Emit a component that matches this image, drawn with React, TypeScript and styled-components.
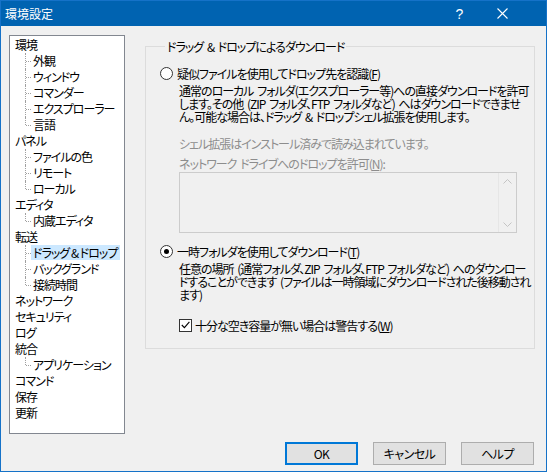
import React from 'react';
import styled, { createGlobalStyle } from 'styled-components';

const GlobalStyle = createGlobalStyle`
  html, body {
    margin: 0;
    padding: 0;
    background: #ffffff;
  }
  body {
    font-family: "Noto Sans CJK JP", "Noto Sans", sans-serif;
    font-size: 12px;
    font-feature-settings: "palt";
  }
`;

const Window = styled.div`
  width: 547px;
  height: 472px;
  box-sizing: border-box;
  border: 1px solid #1572c8;
  background: #f0f0f0;
  display: flex;
  flex-direction: column;
  color: #000;
`;

const TitleBar = styled.div`
  height: 25px;
  background: #0063b1;
  color: #fff;
  display: flex;
  align-items: center;
  padding-left: 4px;
  font-size: 12px;
  line-height: 14px;
`;

const Title = styled.div`
  flex: 1;
`;

const TitleButton = styled.div`
  width: 43px;
  height: 25px;
  display: flex;
  align-items: center;
  justify-content: center;
  font-family: "Liberation Sans", sans-serif;
  font-size: 14px;
`;

const Body = styled.div`
  flex: 1;
  padding: 9px 11px 0 8px;
  display: flex;
  flex-direction: column;
  letter-spacing: -1px;
  word-spacing: 2px;
`;

const Main = styled.div`
  display: flex;
  height: 399px;
  gap: 20px;
`;

const Tree = styled.div`
  width: 116px;
  height: 399px;
  box-sizing: border-box;
  border: 1px solid #828790;
  background: #fff;
  padding-top: 1px;
  word-spacing: 0;
`;

const TreeRow = styled.div<{ $child?: boolean; $last?: boolean }>`
  position: relative;
  height: 16px;
  line-height: 16px;
  padding-left: ${(p) => (p.$child ? '21px' : '5px')};
  white-space: nowrap;

  ${(p) =>
    p.$child &&
    `
    &::before {
      content: '';
      position: absolute;
      left: 15px;
      top: 0;
      height: ${p.$last ? '8px' : '16px'};
      border-left: 1px dotted #a0a0a0;
    }
    &::after {
      content: '';
      position: absolute;
      left: 16px;
      top: 8px;
      width: 5px;
      border-top: 1px dotted #a0a0a0;
    }
  `}
`;

const TreeLabel = styled.span<{ $selected?: boolean }>`
  display: inline-block;
  height: 15px;
  line-height: 15px;
  padding: 0 3px 0 2px;
  background: ${(p) => (p.$selected ? '#cce8ff' : 'transparent')};
`;

const Group = styled.fieldset`
  margin: 5px 0 0 0;
  padding: 0 0 0 14px;
  width: 390px;
  height: 309px;
  box-sizing: border-box;
  border: 1px solid #dcdcdc;
`;

const Legend = styled.legend`
  margin-left: 5px;
  padding: 0 2px;
  line-height: 13px;
  height: 13px;
`;

const OptionRow = styled.label<{ $top: number }>`
  display: flex;
  align-items: center;
  height: 16px;
  margin-top: ${(p) => p.$top}px;
  white-space: nowrap;
`;

const Radio = styled.span<{ $checked?: boolean }>`
  width: 13px;
  height: 13px;
  box-sizing: border-box;
  border: 1px solid #333;
  border-radius: 50%;
  background: #fff;
  margin-right: 4px;
  display: flex;
  align-items: center;
  justify-content: center;

  &::after {
    content: '';
    width: 5px;
    height: 5px;
    border-radius: 50%;
    background: ${(p) => (p.$checked ? '#000' : 'transparent')};
  }
`;

const Check = styled.span`
  width: 13px;
  height: 13px;
  box-sizing: border-box;
  border: 1px solid #333;
  background: #fff;
  margin-right: 3px;
  display: flex;
  align-items: center;
  justify-content: center;
`;

const Desc = styled.div<{ $top: number; $muted?: boolean }>`
  margin: ${(p) => p.$top}px 0 0 19px;
  color: ${(p) => (p.$muted ? '#8d8d8d' : '#000')};
`;

const Line = styled.div`
  height: 13px;
  line-height: 13px;
  white-space: nowrap;
`;

const Indent = styled.div`
  padding-left: 19px;
`;

const DropList = styled.div`
  margin-top: 2px;
  width: 338px;
  height: 61px;
  box-sizing: border-box;
  border: 1px solid #cccccc;
  background: #f0f0f0;
  display: flex;
  justify-content: flex-end;
`;

const ScrollBar = styled.div`
  width: 17px;
  border-left: 1px solid #e6e6e6;
  display: flex;
  flex-direction: column;
  justify-content: space-between;
  align-items: center;
  padding: 6px 0 5px;
`;

const Footer = styled.div`
  margin-top: 8px;
  padding-right: 1px;
  display: flex;
  justify-content: flex-end;
  gap: 15px;
`;

const Button = styled.button<{ $primary?: boolean }>`
  width: 73px;
  height: 23px;
  box-sizing: border-box;
  border: ${(p) => (p.$primary ? '2px solid #0078d7' : '1px solid #adadad')};
  background: #e1e1e1;
  font-family: inherit;
  font-size: 12px;
  font-feature-settings: "palt";
  letter-spacing: -0.5px;
  color: #000;
  padding: 0;
  line-height: 14px;
`;

type Node = { label: string; children?: string[] };

const tree: Node[] = [
  { label: '環境', children: ['外観', 'ウィンドウ', 'コマンダー', 'エクスプローラー', '言語'] },
  { label: 'パネル', children: ['ファイルの色', 'リモート', 'ローカル'] },
  { label: 'エディタ', children: ['内蔵エディタ'] },
  { label: '転送', children: ['ドラッグ & ドロップ', 'バックグランド', '接続時間'] },
  { label: 'ネットワーク' },
  { label: 'セキュリティ' },
  { label: 'ログ' },
  { label: '統合', children: ['アプリケーション'] },
  { label: 'コマンド' },
  { label: '保存' },
  { label: '更新' },
];

const selected = 'ドラッグ & ドロップ';

const Chevron: React.FC<{ down?: boolean }> = ({ down }) => (
  <svg width="9" height="5" viewBox="0 0 9 5">
    <path
      d={down ? 'M0.5 0.5 L4.5 4.5 L8.5 0.5' : 'M0.5 4.5 L4.5 0.5 L8.5 4.5'}
      fill="none"
      stroke="#c4c4c4"
      strokeWidth="1"
    />
  </svg>
);

const App: React.FC = () => (
  <>
    <GlobalStyle />
    <Window>
      <TitleBar>
        <Title>環境設定</Title>
        <TitleButton>?</TitleButton>
        <TitleButton>
          <svg width="11" height="11" viewBox="0 0 11 11">
            <path d="M0.5 0.5 L10.5 10.5 M10.5 0.5 L0.5 10.5" stroke="#fff" strokeWidth="1.1" />
          </svg>
        </TitleButton>
        <div style={{ width: 22 }} />
      </TitleBar>
      <Body>
        <Main>
          <Tree>
            {tree.map((node) => (
              <React.Fragment key={node.label}>
                <TreeRow>{node.label}</TreeRow>
                {node.children?.map((c, i) => (
                  <TreeRow key={c} $child $last={i === node.children!.length - 1}>
                    <TreeLabel $selected={c === selected}>{c}</TreeLabel>
                  </TreeRow>
                ))}
              </React.Fragment>
            ))}
          </Tree>
          <Group>
            <Legend>ドラッグ & ドロップによるダウンロード</Legend>
            <OptionRow $top={12}>
              <Radio />
              疑似ファイルを使用してドロップ先を認識(<u>F</u>)
            </OptionRow>
            <Desc $top={3}>
              <Line>通常のローカル フォルダ(エクスプローラー等)への直接ダウンロードを許可</Line>
              <Line>します。その他 (ZIP フォルダ、FTP フォルダなど) へはダウンロードできませ</Line>
              <Line>ん。可能な場合は、ドラッグ & ドロップシェル拡張を使用します。</Line>
            </Desc>
            <Desc $top={14} $muted>
              <Line>シェル拡張はインストール済みで読み込まれています。</Line>
              <Line style={{ marginTop: 7 }}>
                ネットワーク ドライブへのドロップを許可(<u>N</u>):
              </Line>
              <DropList>
                <ScrollBar>
                  <Chevron />
                  <Chevron down />
                </ScrollBar>
              </DropList>
            </Desc>
            <OptionRow $top={10}>
              <Radio $checked />
              一時フォルダを使用してダウンロード(<u>T</u>)
            </OptionRow>
            <Desc $top={3}>
              <Line>任意の場所 (通常フォルダ、ZIP フォルダ、FTP フォルダなど) へのダウンロー</Line>
              <Line>ドすることができます (ファイルは一時領域にダウンロードされた後移動され</Line>
              <Line>ます)</Line>
            </Desc>
            <Indent>
              <OptionRow $top={16}>
                <Check>
                  <svg width="9" height="8" viewBox="0 0 9 8">
                    <path d="M0.8 4 L3.4 6.6 L8.4 0.8" fill="none" stroke="#000" strokeWidth="1.1" />
                  </svg>
                </Check>
                十分な空き容量が無い場合は警告する(<u>W</u>)
              </OptionRow>
            </Indent>
          </Group>
        </Main>
        <Footer>
          <Button $primary>OK</Button>
          <Button>キャンセル</Button>
          <Button>ヘルプ</Button>
        </Footer>
      </Body>
    </Window>
  </>
);

export default App;
